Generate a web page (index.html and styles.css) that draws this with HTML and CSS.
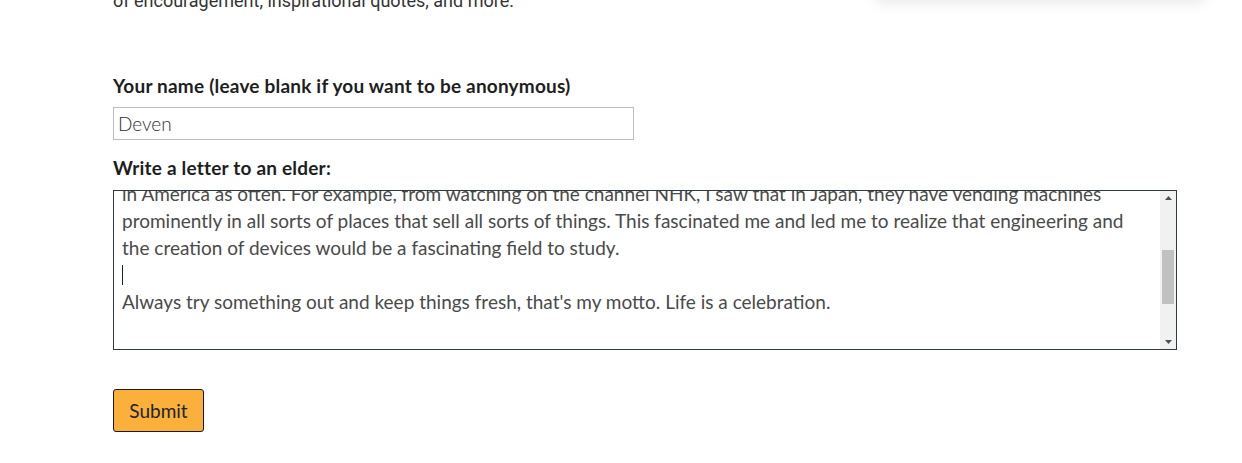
FILE: index.html
```html
<!DOCTYPE html>
<html lang="en">
<head>
<meta charset="utf-8">
<title>Letters to Elders</title>
<link rel="stylesheet" href="styles.css">
</head>
<body>
<div class="page">
  <section class="intro">
    <p class="intro-text">Send a letter to an elder in your community. Share stories, words<br>of encouragement, inspirational quotes, and more.</p>
    <div class="intro-card"></div>
  </section>
  <form class="letter-form">
    <label class="field-label" for="name">Your name (leave blank if you want to be anonymous)</label>
    <input class="name-input" id="name" type="text" value="Deven">
    <label class="field-label label-letter" for="letter">Write a letter to an elder:</label>
    <div class="letter-box">
      <textarea class="letter-input" id="letter">Dear friend,

I hope this letter finds you well. Growing up, I watched a lot of international television
and noticed that other countries have inventions that we don't see
in America as often. For example, from watching on the channel NHK, I saw that in Japan, they have vending machines
prominently in all sorts of places that sell all sorts of things. This fascinated me and led me to realize that engineering and
the creation of devices would be a fascinating field to study.

Always try something out and keep things fresh, that's my motto. Life is a celebration.

thanks for reading!

Deven</textarea>
      <span class="caret"></span>
      <div class="scrollbar" aria-hidden="true">
        <div class="sb-btn">
          <svg width="7" height="4" viewBox="0 0 7 4"><polygon points="3.5,0 7,4 0,4" fill="#505050"/></svg>
        </div>
        <div class="sb-track">
          <div class="sb-thumb"></div>
        </div>
        <div class="sb-btn">
          <svg width="7" height="4" viewBox="0 0 7 4"><polygon points="0,0 7,0 3.5,4" fill="#505050"/></svg>
        </div>
      </div>
    </div>
    <div class="actions">
      <button class="submit-btn" type="button">Submit</button>
    </div>
  </form>
</div>
<script src="script.js"></script>
</body>
</html>
```

FILE: styles.css
```css
html, body {
  margin: 0;
  padding: 0;
  background: #ffffff;
}

.page {
  padding: 0 65px 0 113px;
  font-family: "Lato", "Noto Sans", sans-serif;
  color: #222222;
}

.intro {
  display: flex;
  justify-content: space-between;
  align-items: flex-end;
  margin-top: -46px;
  height: 60px;
}

.intro-text {
  margin: 0;
  font-family: "Roboto", "Liberation Sans", sans-serif;
  font-size: 18px;
  line-height: 27px;
  color: #333333;
}

.intro-card {
  width: 330px;
  height: 40px;
  margin-right: -28px;
  margin-bottom: 15px;
  background: #ffffff;
  box-shadow: 0 4px 14px rgba(0, 0, 0, 0.09);
  border-radius: 6px;
}

.letter-form {
  display: flex;
  flex-direction: column;
  align-items: flex-start;
  padding-top: 59px;
}

.field-label {
  font-weight: 700;
  font-size: 19px;
  line-height: 26px;
  letter-spacing: 0.2px;
  color: #1e1e1e;
}

.name-input {
  box-sizing: border-box;
  margin-top: 8px;
  width: 521px;
  height: 33px;
  padding: 0 4px;
  border: 1px solid #bdbdbd;
  border-radius: 0;
  font-family: "Lato", "Noto Sans", sans-serif;
  font-size: 19px;
  font-weight: 300;
  color: #333333;
  outline: none;
}

.label-letter {
  margin-top: 15px;
}

.letter-box {
  position: relative;
  margin-top: 9px;
  width: 1064px;
  height: 160px;
}

.letter-input {
  display: block;
  box-sizing: border-box;
  width: 100%;
  height: 100%;
  margin: 0;
  padding: 8px 8px 4px 8px;
  border: 1px solid #2f3a42;
  border-radius: 0;
  font-family: "Lato", "Noto Sans", sans-serif;
  font-size: 19px;
  font-weight: 400;
  line-height: 27px;
  color: #4a4a4a;
  resize: none;
  outline: none;
  white-space: pre-wrap;
  overflow: hidden;
}

.caret {
  position: absolute;
  left: 9px;
  top: 75px;
  width: 1px;
  height: 20px;
  background: #222222;
}

.scrollbar {
  position: absolute;
  top: 1px;
  right: 1px;
  bottom: 1px;
  width: 16px;
  display: flex;
  flex-direction: column;
  background: #f1f1f1;
}

.sb-btn {
  height: 14px;
  display: flex;
  align-items: center;
  justify-content: center;
}

.sb-track {
  flex: 1;
  padding: 45px 2px 0 2px;
}

.sb-thumb {
  height: 54px;
  background: #c1c1c1;
}

.actions {
  margin-top: 39px;
}

.submit-btn {
  box-sizing: border-box;
  width: 91px;
  height: 43px;
  background: #fbb03b;
  border: 1px solid #1a1a1a;
  border-radius: 3px;
  font-family: "Lato", "Noto Sans", sans-serif;
  font-size: 19px;
  color: #222222;
  cursor: pointer;
}
```

FILE: script.js
```js
var ta = document.getElementById('letter');
ta.scrollTop = 127;
```
